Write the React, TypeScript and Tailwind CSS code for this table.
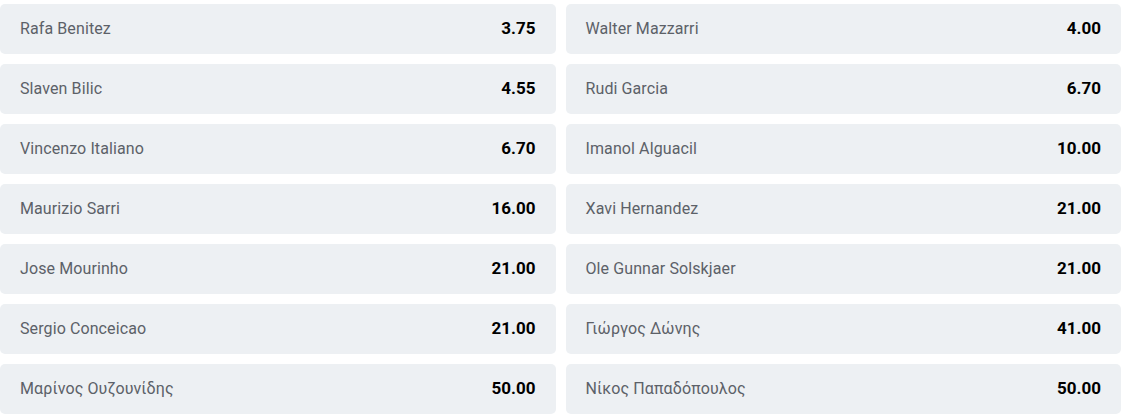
import React from "react";

const rows: [string, string, string, string][] = [
  ["Rafa Benitez", "3.75", "Walter Mazzarri", "4.00"],
  ["Slaven Bilic", "4.55", "Rudi Garcia", "6.70"],
  ["Vincenzo Italiano", "6.70", "Imanol Alguacil", "10.00"],
  ["Maurizio Sarri", "16.00", "Xavi Hernandez", "21.00"],
  ["Jose Mourinho", "21.00", "Ole Gunnar Solskjaer", "21.00"],
  ["Sergio Conceicao", "21.00", "Γιώργος Δώνης", "41.00"],
  ["Μαρίνος Ουζουνίδης", "50.00", "Νίκος Παπαδόπουλος", "50.00"],
];

function Cell({ name, odd }: { name: string; odd: string }) {
  return (
    <div className="flex h-[50px] items-center justify-between rounded-[5px] bg-[#edf0f3] pl-5 pr-5">
      <span className="text-[16px] tracking-[0.1px] text-[#5c6168]">{name}</span>
      <span className="text-[17px] font-bold text-black">{odd}</span>
    </div>
  );
}

export default function App() {
  return (
    <div
      className="w-[1121px] bg-white pt-[4px]"
      style={{ fontFamily: "Roboto, 'Noto Sans', sans-serif" }}
    >
      <div className="grid grid-cols-2 gap-x-[10px] gap-y-[10px]">
        {rows.map((r, i) => (
          <React.Fragment key={i}>
            <Cell name={r[0]} odd={r[1]} />
            <Cell name={r[2]} odd={r[3]} />
          </React.Fragment>
        ))}
      </div>
    </div>
  );
}
